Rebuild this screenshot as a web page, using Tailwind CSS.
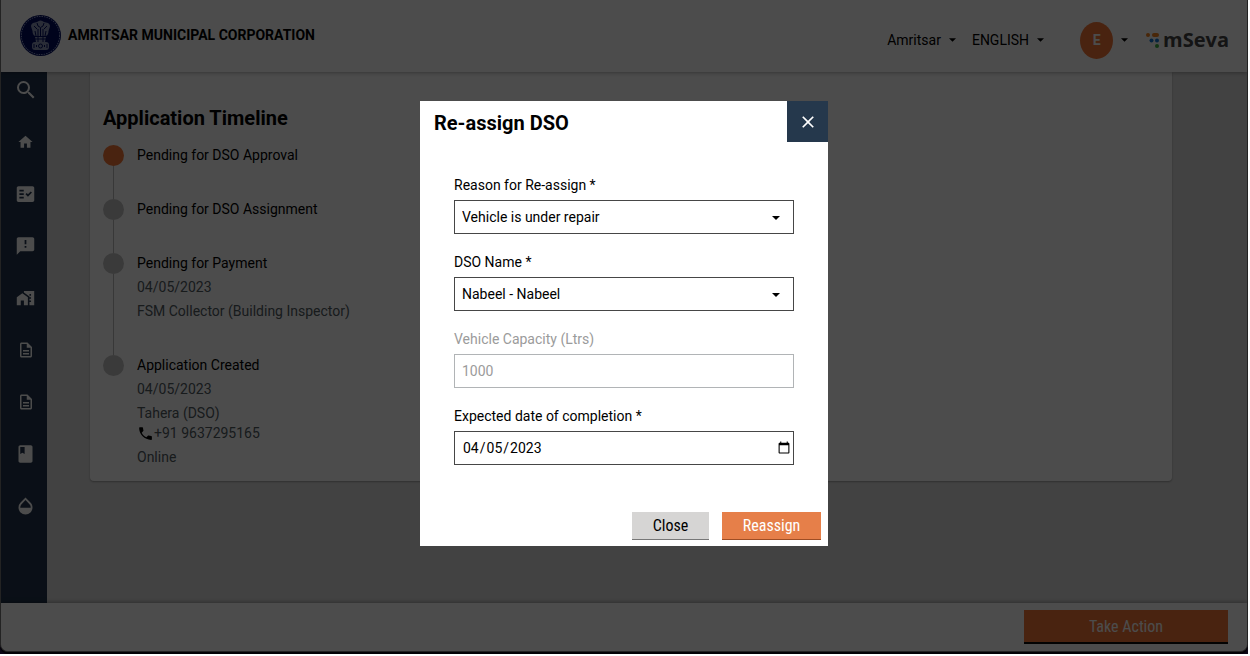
<!DOCTYPE html>
<html lang="en">
<head>
<meta charset="utf-8">
<title>mSeva - Re-assign DSO</title>
<script src="https://cdn.jsdelivr.net/npm/@tailwindcss/browser@4"></script>
</head>
<body class="h-screen overflow-hidden bg-white pr-0.5 pb-0.5 font-['Roboto',sans-serif] text-sm text-black">
<div class="relative h-full bg-[#0c0716] pb-0.5">
  <div class="flex h-full flex-col overflow-hidden rounded-b-lg border-x border-b border-[#777] bg-[#dedede]">
    <header class="relative z-10 flex h-[72px] shrink-0 items-center justify-between bg-white pr-[18px] pl-[19px] shadow-[0_1px_4px_rgba(0,0,0,0.3)]">
      <div class="flex items-center gap-[7px] pb-0.5">
        <svg class="size-[41px]" viewBox="0 0 41 41" aria-label="Emblem" role="img">
          <circle cx="20.500" cy="20.500" r="20.500" fill="#000c60"/>
          <circle cx="20.500" cy="20.500" r="19" fill="none" stroke="#8d98c8" stroke-width="1.200" stroke-dasharray="1.500 1"/>
          <circle cx="20.500" cy="20.500" r="18.600" fill="#000c60"/>
          <g fill="#8d98b8">
            <path d="M17 7q3.500-3 7 0l4 1q3 2 1.500 5l-1 3q0 4-2.500 5H15q-2.500-1-2.500-5l-1-3q-1.500-3 1.500-5z"/>
            <path d="M15 22h11l-1 5h-9z"/><rect x="12" y="27" width="17" height="8" rx="3"/>
          </g>
          <g fill="none" stroke="#000c60" stroke-width="1">
            <path d="M17 8l1 3 2.500 1.500L23 11l1-3M14 11l3 3M27 11l-3 3M18 14v7M20.500 13v8M23 14v7M15 16l1 5M26 16l-1 5M14 24h13M18 22v5M23 22v5"/>
            <circle cx="20.500" cy="31" r="2"/><path d="M14 29v4M16.500 30v2M24.500 30v2M27 29v4"/>
          </g>
        </svg>
        <h1 class="text-sm font-bold">AMRITSAR MUNICIPAL CORPORATION</h1>
      </div>
      <div class="flex items-center pt-2">
        <button class="flex items-center gap-2">Amritsar <svg class="h-1 w-[7px]" viewBox="0 0 8 4"><path d="M0 0h8L4 4z"/></svg></button>
        <button class="ml-4 flex items-center gap-2">ENGLISH <svg class="h-1 w-[7px]" viewBox="0 0 8 4"><path d="M0 0h8L4 4z"/></svg></button>
        <button class="ml-9 flex items-center gap-2"><span class="flex h-[37px] w-[33px] items-center justify-center rounded-[50%] bg-[#f47738] font-bold text-white">E</span><svg class="h-1 w-[7px]" viewBox="0 0 8 4"><path d="M0 0h8L4 4z"/></svg></button>
        <a href="#" class="ml-[18px] flex items-center gap-1 font-['Open_Sans',sans-serif] text-xl leading-6 font-bold text-[#444]">
          <svg class="h-[17px] w-[13px]" viewBox="0 0 13 17"><g fill="#f58220"><circle cx="2" cy="3" r="2"/><rect x="6" y="1" width="7" height="4" rx="2"/></g><g fill="#1676d2"><circle cx="5.500" cy="8.500" r="2"/><circle cx="11" cy="8.500" r="2"/></g><circle cx="11" cy="14" r="2" fill="#3cb043"/></svg>
          mSeva</a>
      </div>
    </header>
    <div class="flex min-h-0 flex-1">
      <nav class="flex w-[46px] shrink-0 flex-col items-center gap-7 bg-[#22344d] pt-1.5 pl-[3px] text-white">
        <a href="#" aria-label="Search"><svg class="size-6" viewBox="0 0 24 24" fill="currentColor"><path d="M15.500 14h-.79l-.28-.27A6.470 6.470 0 0 0 16 9.500 6.500 6.500 0 1 0 9.500 16c1.610 0 3.090-.59 4.230-1.570l.27.28v.79l5 4.990L20.490 19zm-6 0a4.500 4.500 0 1 1 0-9 4.500 4.500 0 0 1 0 9z"/></svg></a>
        <a href="#" aria-label="Home"><svg class="h-6 w-[17px]" viewBox="0 0 24 24" fill="currentColor"><path d="M10 20v-6h4v6h5v-8h3L12 3 2 12h3v8z"/></svg></a>
        <a href="#" aria-label="Inbox"><svg class="h-6 w-[21px]" viewBox="0 0 24 24" fill="currentColor"><path fill-rule="evenodd" d="M20 3H4c-1.100 0-2 .9-2 2v14c0 1.100.9 2 2 2h16c1.100 0 2-.9 2-2V5c0-1.100-.9-2-2-2zM10 17H5v-2h5zm0-4H5v-2h5zm0-4H5V7h5zm4.820 6L12 12.160l1.410-1.410 1.410 1.420L17.990 9l1.420 1.420z"/></svg></a>
        <a href="#" aria-label="Complaints"><svg class="h-6 w-[21px]" viewBox="0 0 24 24" fill="currentColor"><path d="M20 2H4c-1.100 0-2 .9-2 2v18l4-4h14c1.100 0 2-.9 2-2V4c0-1.100-.9-2-2-2zm-7 12h-2v-2h2zm0-4h-2V5h2z"/></svg></a>
        <a href="#" aria-label="Property"><svg class="h-6 w-[19px]" viewBox="0 0 24 24" fill="currentColor"><path d="M1 11v10h5v-6h4v6h5V11L8 6z"/><path d="M10 3v1.970l7 5V11h2v2h-2v2h2v2h-2v4h6V3zm9 6h-2V7h2z"/></svg></a>
        <a href="#" aria-label="Trade"><svg class="h-6 w-[18px]" viewBox="0 0 24 24" fill="currentColor"><path d="M8 16h8v2H8zm0-4h8v2H8zm6-10H6c-1.100 0-2 .9-2 2v16c0 1.100.89 2 1.990 2H18c1.100 0 2-.9 2-2V8zm4 18H6V4h7v5h5z"/></svg></a>
        <a href="#" aria-label="Documents"><svg class="h-6 w-[18px]" viewBox="0 0 24 24" fill="currentColor"><path d="M8 16h8v2H8zm0-4h8v2H8zm6-10H6c-1.100 0-2 .9-2 2v16c0 1.100.89 2 1.990 2H18c1.100 0 2-.9 2-2V8zm4 18H6V4h7v5h5z"/></svg></a>
        <a href="#" aria-label="Receipts"><svg class="h-6 w-[21px]" viewBox="0 0 24 24" fill="currentColor"><path fill-rule="evenodd" d="M18 2H6c-1.100 0-2 .9-2 2v16c0 1.100.9 2 2 2h12c1.100 0 2-.9 2-2V4c0-1.100-.9-2-2-2zM6 4h5v8l-2.500-1.500L6 12z"/></svg></a>
        <a href="#" aria-label="Water"><svg class="h-6 w-[21px]" viewBox="0 0 24 24" fill="currentColor"><path d="M17.660 8 12 2.350 6.340 8A8.020 8.020 0 0 0 4 13.640c0 2 .78 4.110 2.340 5.670a7.990 7.990 0 0 0 11.320 0c1.560-1.560 2.340-3.670 2.340-5.670S19.220 9.560 17.660 8zM6 14c.01-2 .62-3.270 1.760-4.400L12 5.270l4.240 4.380C17.380 10.770 17.990 12 18 14z"/></svg></a>
      </nav>
      <main class="min-w-0 flex-1 pr-[75px] pl-[43px]">
        <section class="rounded-b bg-white px-[13px] pt-[34px] pb-3 shadow-[0_1px_2px_rgba(0,0,0,0.3)]">
          <h2 class="mb-[13px] text-xl leading-6 font-bold">Application Timeline</h2>
          <ol class="leading-6 text-[#505a5f]">
            <li class="flex gap-[13px]">
              <div class="flex w-[21px] flex-col items-center pt-0.5"><span class="size-[21px] shrink-0 rounded-full bg-[#f47738]"></span><span class="-mb-0.5 w-px flex-1 bg-[#bbb]"></span></div>
              <div class="pb-[30px]"><h3 class="text-black">Pending for DSO Approval</h3></div>
            </li>
            <li class="flex gap-[13px]">
              <div class="flex w-[21px] flex-col items-center pt-0.5"><span class="size-[21px] shrink-0 rounded-full bg-[#c4c4c4]"></span><span class="-mb-0.5 w-px flex-1 bg-[#bbb]"></span></div>
              <div class="pb-[30px]"><h3 class="text-black">Pending for DSO Assignment</h3></div>
            </li>
            <li class="flex gap-[13px]">
              <div class="flex w-[21px] flex-col items-center pt-0.5"><span class="size-[21px] shrink-0 rounded-full bg-[#c4c4c4]"></span><span class="-mb-0.5 w-px flex-1 bg-[#bbb]"></span></div>
              <div class="pb-[30px]"><h3 class="text-black">Pending for Payment</h3><p>04/05/2023</p><p>FSM Collector (Building Inspector)</p></div>
            </li>
            <li class="flex gap-[13px]">
              <div class="w-[21px] pt-0.5"><span class="block size-[21px] rounded-full bg-[#c4c4c4]"></span></div>
              <div><h3 class="text-black">Application Created</h3><p>04/05/2023</p><p>Tahera (DSO)</p>
                <p class="mb-1 flex h-4 items-center"><svg class="size-[17px]" viewBox="0 0 24 24" fill="#000"><path d="M6.620 10.790c1.440 2.830 3.760 5.140 6.590 6.590l2.200-2.200c.27-.27.67-.36 1.020-.24 1.120.37 2.330.57 3.570.57.55 0 1 .45 1 1V20c0 .55-.45 1-1 1-9.390 0-17-7.610-17-17 0-.55.45-1 1-1h3.500c.55 0 1 .45 1 1 0 1.250.2 2.450.57 3.570.11.35.03.74-.25 1.020z"/></svg><a href="#">+91 9637295165</a></p>
                <p>Online</p></div>
            </li>
          </ol>
        </section>
      </main>
    </div>
    <footer class="flex h-12 shrink-0 items-center justify-end bg-white pr-[19px] shadow-[0_-1px_4px_rgba(0,0,0,0.3)]">
      <button class="h-[34px] w-[204px] border-b-2 border-[#0b0c0c] bg-[#f47738] pt-0.5 font-['Roboto_Condensed','Liberation_Sans_Narrow','Roboto',sans-serif] text-base text-white">Take Action</button>
    </footer>
  </div>

  <div class="absolute inset-0 z-20 flex items-center justify-center rounded-b-lg bg-black/70 pb-[7px]">
    <div role="dialog" aria-modal="true" aria-labelledby="dialog-title" class="w-[408px] bg-white">
      <div class="flex items-start justify-between pl-3.5">
        <h2 id="dialog-title" class="pt-0.5 text-xl leading-10 font-bold">Re-assign DSO</h2>
        <button aria-label="Dismiss" class="flex size-[41px] items-center justify-center bg-[#25384c] text-white"><svg class="size-5" viewBox="0 0 24 24" fill="currentColor"><path d="M19 6.410 17.590 5 12 10.590 6.410 5 5 6.410 10.590 12 5 17.590 6.410 19 12 13.410 17.590 19 19 17.590 13.410 12z"/></svg></button>
      </div>
      <form class="flex flex-col gap-5 px-[34px] pt-[34px]">
        <div class="flex flex-col gap-[7px]">
          <label for="reason" class="leading-4">Reason for Re-assign *</label>
          <div class="relative"><select id="reason" class="block h-[34px] w-full appearance-none border border-[#464646] bg-white px-[7px]"><option>Vehicle is under repair</option></select><svg class="pointer-events-none absolute top-4 right-3.5 h-1 w-2" viewBox="0 0 8 4"><path d="M0 0h8L4 4z"/></svg></div>
        </div>
        <div class="flex flex-col gap-[7px]">
          <label for="dso" class="leading-4">DSO Name *</label>
          <div class="relative"><select id="dso" class="block h-[34px] w-full appearance-none border border-[#464646] bg-white px-[7px]"><option>Nabeel - Nabeel</option></select><svg class="pointer-events-none absolute top-4 right-3.5 h-1 w-2" viewBox="0 0 8 4"><path d="M0 0h8L4 4z"/></svg></div>
        </div>
        <div class="flex flex-col gap-[7px]">
          <label for="capacity" class="leading-4 text-[#9b9b9b]">Vehicle Capacity (Ltrs)</label>
          <input id="capacity" value="1000" disabled class="h-[34px] w-full border border-[#b1b4b6] px-[7px] text-[#9b9b9b]">
        </div>
        <div class="flex flex-col gap-[7px]">
          <label for="date" class="leading-4">Expected date of completion *</label>
          <input id="date" type="date" value="2023-04-05" class="h-[34px] w-full border border-[#464646] pl-[7px]">
        </div>
      </form>
      <div class="flex justify-end gap-[13px] pt-[47px] pr-[7px] pb-1.5 font-['Roboto_Condensed','Liberation_Sans_Narrow','Roboto',sans-serif] text-base">
        <button class="h-7 w-[77px] border-b border-[#777] bg-[#d6d5d4]">Close</button>
        <button class="h-7 w-[99px] border-b border-[#9e4d24] bg-[#e67f49] text-white">Reassign</button>
      </div>
    </div>
  </div>
</div>
</body>
</html>
